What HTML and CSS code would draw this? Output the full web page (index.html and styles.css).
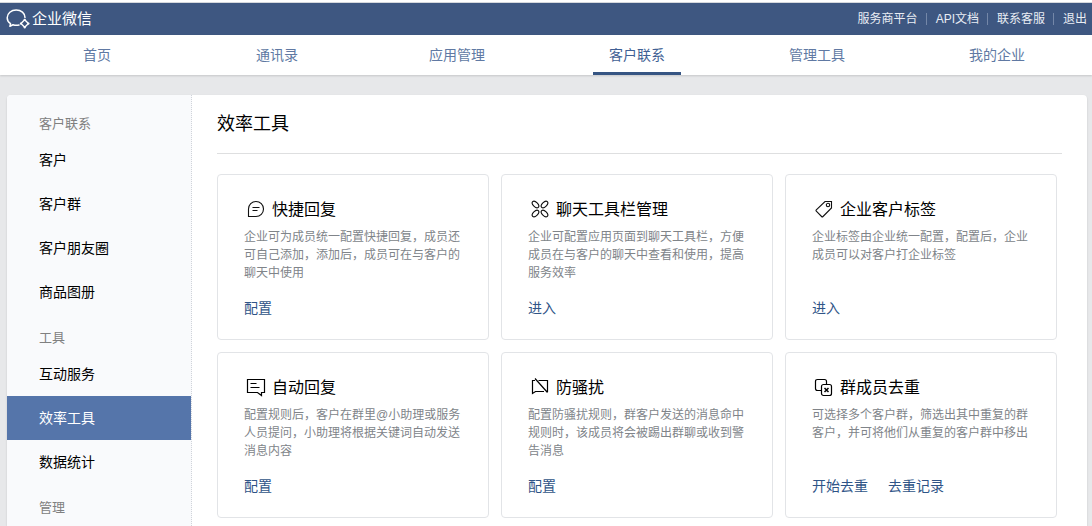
FILE: index.html
```html
<!DOCTYPE html>
<html lang="zh-CN">
<head>
<meta charset="utf-8">
<title>企业微信</title>
<link rel="stylesheet" href="styles.css">
</head>
<body>
<header class="topbar">
  <a class="brand" href="#">
    <svg class="brand-logo" width="24" height="20" viewBox="0 0 24 20" fill="none" stroke="currentColor" stroke-width="1.5" stroke-linecap="round" stroke-linejoin="round">
      <path d="M19 8.500C19 4.300 15.200 1 10.200 1 5.200 1 1.200 4.400 1.200 8.700c0 2.500 1.300 4.600 3.300 6L3.900 17.300l3.100-1.500c1.900.6 4 .7 6 .3"/>
      <path stroke-width="1.400" d="M18.700 10.800l3.700 3.700-3.700 3.700-3.700-3.700Z"/>
      <path stroke-width="2.200" d="M18.700 10.800v.1M22.500 14.500v.1M18.700 18.300v.1M14.900 14.500v.1"/>
    </svg>
    <span>企业微信</span>
  </a>
  <nav class="toplinks">
    <a href="#">服务商平台</a>
    <a href="#">API文档</a>
    <a href="#">联系客服</a>
    <a href="#">退出</a>
  </nav>
</header>
<nav class="mainnav">
  <a href="#">首页</a>
  <a href="#">通讯录</a>
  <a href="#">应用管理</a>
  <a class="current" href="#">客户联系</a>
  <a href="#">管理工具</a>
  <a href="#">我的企业</a>
</nav>
<div class="panel">
  <aside class="sidebar">
    <h2>客户联系</h2>
    <a href="#">客户</a>
    <a href="#">客户群</a>
    <a href="#">客户朋友圈</a>
    <a href="#">商品图册</a>
    <h2>工具</h2>
    <a href="#">互动服务</a>
    <a class="current" href="#">效率工具</a>
    <a href="#">数据统计</a>
    <h2>管理</h2>
  </aside>
  <main class="content">
    <h1>效率工具</h1>
    <div class="cards">
      <section class="card">
        <h3><svg class="icon" viewBox="0 0 20 20"><path d="M2.500 17.500V10A7.500 7.500 0 1 1 10 17.500ZM6.500 8.500h7M6.500 11.500h5"/></svg>快捷回复</h3>
        <p>企业可为成员统一配置快捷回复，成员还可自己添加，添加后，成员可在与客户的聊天中使用</p>
        <div class="actions"><a href="#">配置</a></div>
      </section>
      <section class="card">
        <h3><svg class="icon" viewBox="0 0 20 20"><ellipse cx="5.500" cy="5.500" rx="4" ry="2.300" transform="rotate(45 5.500 5.500)"/><ellipse cx="14.500" cy="5.500" rx="4" ry="2.300" transform="rotate(-45 14.500 5.500)"/><ellipse cx="5.500" cy="14.500" rx="4" ry="2.300" transform="rotate(-45 5.500 14.500)"/><ellipse cx="14.500" cy="14.500" rx="4" ry="2.300" transform="rotate(45 14.500 14.500)"/></svg>聊天工具栏管理</h3>
        <p>企业可配置应用页面到聊天工具栏，方便成员在与客户的聊天中查看和使用，提高服务效率</p>
        <div class="actions"><a href="#">进入</a></div>
      </section>
      <section class="card">
        <h3><svg class="icon" viewBox="0 0 20 20"><path d="M11 2.500h6.500V9L9 17.500Q8.300 18.200 7.600 17.500L2.300 12.200Q1.600 11.500 2.300 10.800Z"/><circle cx="14" cy="6" r="1.700"/></svg>企业客户标签</h3>
        <p>企业标签由企业统一配置，配置后，企业成员可以对客户打企业标签</p>
        <div class="actions"><a href="#">进入</a></div>
      </section>
      <section class="card">
        <h3><svg class="icon heavy" viewBox="0 0 20 20"><path d="M1.500 2.500h17v13h-3v3l-4-3h-10ZM4.500 6.500h6M4.500 10.500h9"/></svg>自动回复</h3>
        <p>配置规则后，客户在群里@小助理或服务人员提问，小助理将根据关键词自动发送消息内容</p>
        <div class="actions"><a href="#">配置</a></div>
      </section>
      <section class="card">
        <h3><svg class="icon heavy" viewBox="0 0 20 20"><path d="M8.500 3.500h9V15M5 3.500H2.500v13l3-2H14M5 1.500l12.500 14"/></svg>防骚扰</h3>
        <p>配置防骚扰规则，群客户发送的消息命中规则时，该成员将会被踢出群聊或收到警告消息</p>
        <div class="actions"><a href="#">配置</a></div>
      </section>
      <section class="card">
        <h3><svg class="icon heavy" viewBox="0 0 20 20"><rect x="7.500" y="7.500" width="10" height="11" rx="2"/><path d="M7.500 13.500h-4q-2 0-2-2v-7q0-2 2-2h7q2 0 2 2v3"/><path stroke-width="1.500" d="M10.500 11l4 4M14.500 11l-4 4"/></svg>群成员去重</h3>
        <p>可选择多个客户群，筛选出其中重复的群客户，并可将他们从重复的客户群中移出</p>
        <div class="actions"><a href="#">开始去重</a><a href="#">去重记录</a></div>
      </section>
    </div>
  </main>
</div>
</body>
</html>
```
FILE: styles.css
```css
* {
  box-sizing: border-box;
}
body {
  margin: 0;
  min-height: 100vh;
  display: flex;
  flex-direction: column;
  background: #e7e8ea;
  color: #000;
  font: 14px/20px "Liberation Sans", "Noto Sans CJK SC", sans-serif;
  border-top: 2px solid #fff;
}
a {
  color: inherit;
  text-decoration: none;
}
h1, h2, h3, p {
  margin: 0;
  font-weight: 400;
}
.topbar {
  display: flex;
  align-items: center;
  justify-content: space-between;
  height: 33px;
  padding: 0 5px 0 6px;
  border-top: 1px solid #d5d8dd;
  background: #3e5781;
  color: #fff;
}
.brand {
  display: flex;
  align-items: center;
  gap: 2px;
  font-size: 15px;
}
.toplinks {
  display: flex;
  font-size: 12px;
  line-height: 12px;
  color: #e9edf4;
}
.toplinks a + a {
  margin-left: 8px;
  padding-left: 9px;
  border-left: 1px solid #7487a8;
}
.mainnav {
  display: grid;
  grid-template-columns: repeat(6, 1fr);
  justify-items: center;
  height: 40px;
  padding: 0 5px 0 7px;
  background: #fff;
  box-shadow: 0 1px 2px rgba(0, 0, 0, 0.15);
  color: #6079a3;
}
.mainnav a {
  padding: 10px 16px 7px;
  border-bottom: 3px solid transparent;
}
.mainnav .current {
  color: #3f5f94;
  border-color: #365583;
}
.panel {
  flex: 1;
  display: flex;
  margin: 20px 5px 0 7px;
  background: #fff;
  border-radius: 4px 4px 0 0;
  box-shadow: 0 1px 2px rgba(0, 0, 0, 0.15);
}
.sidebar {
  flex: 0 0 185px;
  padding-top: 5px;
  background: #f9fafc;
  border-right: 1px dotted #d0d4da;
  border-radius: 4px 0 0 0;
}
.sidebar h2 {
  padding: 15px 32px 5px;
  font-size: 13px;
  line-height: 18px;
  color: #808080;
}
.sidebar a {
  display: block;
  padding: 12px 32px;
}
.sidebar .current {
  background: #5575aa;
  color: #fff;
}
.content {
  flex: 1;
  padding: 16px 25px 8px;
}
.content h1 {
  padding-bottom: 16px;
  border-bottom: 1px solid #dedfe0;
  font-size: 18px;
  line-height: 26px;
}
.cards {
  display: grid;
  grid-template-columns: repeat(3, 1fr);
  gap: 12px;
  padding: 20px 5px 0 0;
}
.card {
  padding: 22px 26px 21px;
  border: 1px solid #e2e4e7;
  border-radius: 4px;
}
.card h3 {
  display: flex;
  align-items: center;
  gap: 6px;
  padding-left: 2px;
  font-size: 16px;
  line-height: 26px;
}
.icon {
  width: 20px;
  height: 20px;
  margin-bottom: 2px;
  fill: none;
  stroke: #111;
  stroke-width: 1.1;
}
.heavy {
  stroke: #000;
  stroke-width: 1.2;
}
.card p {
  min-height: 54px;
  margin: 5px 0 16px;
  font-size: 12px;
  line-height: 18px;
  color: #808489;
}
.actions {
  display: flex;
  gap: 20px;
  color: #2f5487;
}
```
